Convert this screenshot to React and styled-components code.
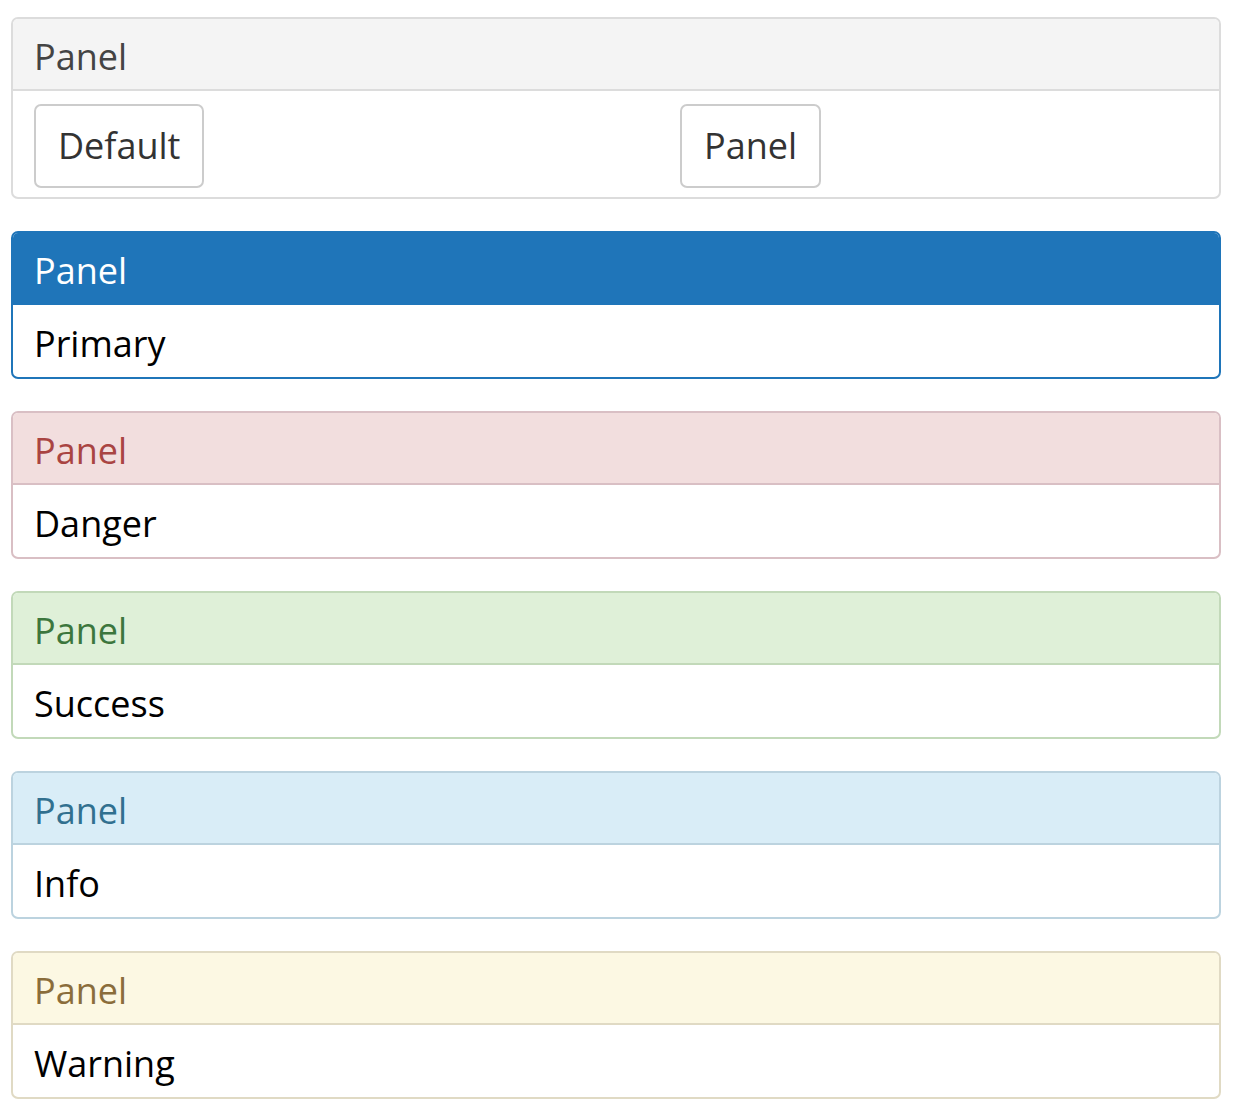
import React from "react";
import styled, { createGlobalStyle } from "styled-components";

const Global = createGlobalStyle`
  html, body { margin: 0; padding: 0; background: #fff; }
  body { font-family: "Open Sans", "Noto Sans", sans-serif; color: #000; }
`;

const variants = {
  default: { border: "#dcdcdc", bg: "#f4f4f4", color: "#444", divider: "#dcdcdc" },
  primary: { border: "#1f75b9", bg: "#1f75b9", color: "#fff", divider: "#1f75b9" },
  danger: { border: "#d9bfc4", bg: "#f2dede", color: "#a94442", divider: "#d9bfc4" },
  success: { border: "#c2d9b9", bg: "#dff0d8", color: "#3c763d", divider: "#c2d9b9" },
  info: { border: "#bcd3df", bg: "#d9edf7", color: "#31708f", divider: "#bcd3df" },
  warning: { border: "#e0dac4", bg: "#fcf8e3", color: "#8a6d3b", divider: "#e0dac4" },
};

const Page = styled.div`
  padding: 17px 15px 19px 11px;
  display: flex;
  flex-direction: column;
  gap: 32px;
`;

const Panel = styled.section`
  border: 2px solid ${(p) => variants[p.$v].border};
  border-radius: 7px;
  overflow: hidden;
  background: #fff;
`;

const Heading = styled.div`
  background: ${(p) => variants[p.$v].bg};
  color: ${(p) => variants[p.$v].color};
  border-bottom: 2px solid ${(p) => variants[p.$v].divider};
  padding: 18px 21px 12px;
  font-size: 36px;
  line-height: 40px;
`;

const Body = styled.div`
  padding: 19px 21px 13px;
  font-size: 36px;
  line-height: 40px;
  color: #000;
`;

const ButtonBody = styled.div`
  padding: 13px 21px 9px;
  display: grid;
  grid-template-columns: 646px 1fr;
  justify-items: start;
`;

const Button = styled.button`
  font-family: "Open Sans", "Noto Sans", sans-serif;
  font-size: 36px;
  line-height: 40px;
  color: #333;
  background: #fff;
  border: 2px solid #cccccc;
  border-radius: 7px;
  padding: 20px 22px;
  margin: 0;
  cursor: pointer;
`;

const items = [
  ["primary", "Primary"],
  ["danger", "Danger"],
  ["success", "Success"],
  ["info", "Info"],
  ["warning", "Warning"],
];

export default function App() {
  return (
    <>
      <Global />
      <Page>
        <Panel $v="default">
          <Heading $v="default">Panel</Heading>
          <ButtonBody>
            <Button>Default</Button>
            <Button>Panel</Button>
          </ButtonBody>
        </Panel>
        {items.map(([v, label]) => (
          <Panel key={v} $v={v}>
            <Heading $v={v}>Panel</Heading>
            <Body>{label}</Body>
          </Panel>
        ))}
      </Page>
    </>
  );
}
